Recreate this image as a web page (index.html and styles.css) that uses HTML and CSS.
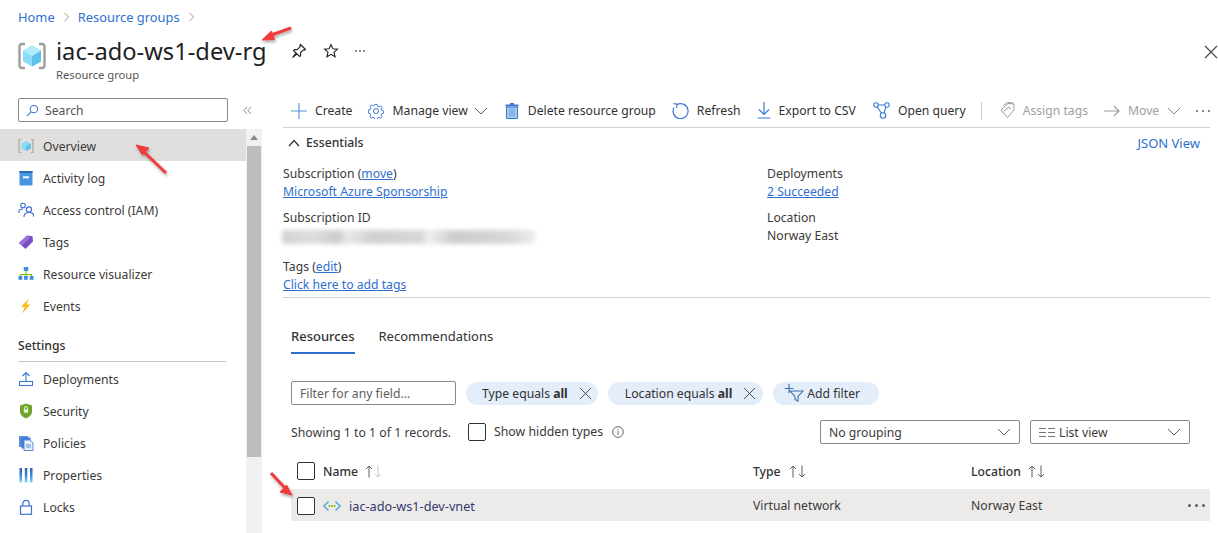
FILE: index.html
```html
<!DOCTYPE html>
<html lang="en">
<head>
<meta charset="utf-8">
<title>iac-ado-ws1-dev-rg</title>
<link rel="stylesheet" href="styles.css">
</head>
<body>
<div class="page">
  <header class="head">
    <nav class="crumbs"><a>Home</a><svg class="crumb-sep" viewBox="0 0 8 12"><path d="M1.500 1l5 5-5 5"/></svg><a>Resource groups</a><svg class="crumb-sep" viewBox="0 0 8 12"><path d="M1.500 1l5 5-5 5"/></svg></nav>
    <div class="titlebar">
      <svg class="rg-icon" viewBox="0 0 28 28">
        <path d="M7 2H3.200L1.500 3.500v21L3.200 26H7" fill="none" stroke="#9c9c9c" stroke-width="2.400"/>
        <path d="M21 2h3.800l1.700 1.500v21L24.800 26H21" fill="none" stroke="#9c9c9c" stroke-width="2.400"/>
        <path d="M14 3.500l9 5v11l-9 5-9-5v-11z" fill="#8adcf6"/>
        <path d="M14 14l9-5.500v11l-9 5z" fill="#5fc2e6"/>
        <path d="M14 3.500l9 5L14 14 5 8.500z" fill="#b3ebfb"/>
      </svg>
      <div class="title-text">
        <h1>iac-ado-ws1-dev-rg</h1>
        <p>Resource group</p>
      </div>
      <div class="title-actions">
        <svg viewBox="0 0 16 16" class="ic16"><path d="M9.500 1.500l5 5-1 .6-1-.3-3 3 .2 2.700-1 1L5 10 1.500 14.500 6 11 2.500 7.500l1-1 2.700.2 3-3-.3-1z" fill="none" stroke="#222" stroke-width="1.100"/></svg>
        <svg viewBox="0 0 16 16" class="ic16"><path d="M8 1.500l1.900 4.300 4.600.4-3.500 3 1.100 4.600L8 11.400l-4.100 2.400L5 9.200l-3.500-3 4.600-.4z" fill="none" stroke="#222" stroke-width="1.100"/></svg>
        <span class="dots-sm"><i></i><i></i><i></i></span>
      </div>
      <svg class="close-x" viewBox="0 0 14 14"><path d="M1 1l12 12M13 1L1 13"/></svg>
    </div>
  </header>

  <div class="main">
    <aside class="side">
      <div class="side-scroll">
        <div class="search-row">
          <div class="search">
            <svg viewBox="0 0 14 14" class="ic13"><circle cx="8.500" cy="5.500" r="4" fill="none" stroke="#3f74c9" stroke-width="1.100"/><path d="M5.500 8.500L1 13" stroke="#3f74c9" stroke-width="1.100"/></svg>
            <span>Search</span>
          </div>
          <svg class="collapse" viewBox="0 0 10 10"><path d="M4.500 1L1 5l3.500 4M9 1L5.500 5 9 9"/></svg>
        </div>
        <ul class="nav">
          <li class="active"><svg class="nav-ic" viewBox="0 0 16 16"><path d="M3 1.500H1v13h2M13 1.500h2v13h-2" fill="none" stroke="#aaa" stroke-width="1.200"/><path d="M8 3l4.700 2.500v5L8 13l-4.700-2.500v-5z" fill="#8adcf6"/><path d="M8 8l4.700-2.500v5L8 13z" fill="#5fc2e6"/></svg>Overview</li>
          <li><svg class="nav-ic" viewBox="0 0 16 16"><rect x="1.500" y="1" width="13" height="14.500" rx="1.200" fill="#4a95e0"/><rect x="1.500" y="1" width="13" height="2" fill="#2a6cb8"/><rect x="5" y="6.300" width="6" height="2" fill="#fff"/></svg>Activity log</li>
          <li><svg class="nav-ic" viewBox="0 0 16 16" fill="none" stroke="#3d6fd3" stroke-width="1.100"><circle cx="5" cy="3.500" r="2.300"/><circle cx="11" cy="7.500" r="2.600"/><path d="M1 11V9.500C1 7.500 2.500 7 5 7M6 15c0-3 2-4.500 5-4.500s5 1.500 5 4.500"/></svg>Access control (IAM)</li>
          <li><svg class="nav-ic" viewBox="0 0 16 16"><path d="M1 9l8-7.500 5.500.7.500 5.300L7.500 15z" fill="#7b4dc4"/><path d="M1 9l8-7.500 3 2-8 8z" fill="#9a71dc"/></svg>Tags</li>
          <li><svg class="nav-ic" viewBox="0 0 16 16"><path d="M8 4v6M2.500 11V8.500h11V11" fill="none" stroke="#7fba00" stroke-width="1.100"/><rect x="5.800" y="1" width="4.400" height="4" fill="#3f8ddb"/><rect x="0.500" y="10" width="3.800" height="3.800" fill="#3f8ddb"/><rect x="6" y="10" width="3.800" height="3.800" fill="#3f8ddb"/><rect x="11.700" y="10" width="3.800" height="3.800" fill="#3f8ddb"/></svg>Resource visualizer</li>
          <li><svg class="nav-ic" viewBox="0 0 16 16"><path d="M11 .5L3 9h4l-3 6.500L12.500 6.500h-4z" fill="#fbb91a"/></svg>Events</li>
        </ul>
        <div class="side-head">Settings</div>
        <ul class="nav">
          <li><svg class="nav-ic" viewBox="0 0 16 16" fill="none" stroke="#3d78d3" stroke-width="1.100"><path d="M8 10V1.500M4.500 5L8 1.500 11.500 5"/><rect x="1.500" y="10.500" width="13" height="4"/></svg>Deployments</li>
          <li><svg class="nav-ic" viewBox="0 0 16 16"><path d="M8 .5l6 2v6c0 3.500-3 5.700-6 7-3-1.300-6-3.500-6-7v-6z" fill="#6fa52a"/><rect x="5.800" y="6.200" width="4.400" height="3.500" fill="#e8f3d6"/><path d="M6.500 6.200V5a1.500 1.500 0 013 0v1.200" fill="none" stroke="#e8f3d6"/></svg>Security</li>
          <li><svg class="nav-ic" viewBox="0 0 16 16"><rect x="1" y="1" width="9" height="11" fill="#5a8fdd"/><rect x="3.500" y="2.500" width="9" height="11" fill="#3d78d3"/><path d="M6 5h6l3 3v7.500H6z" fill="#e8f0fb" stroke="#5a8fdd"/><path d="M8 10h5M8 12h5" stroke="#5a8fdd"/></svg>Policies</li>
          <li><svg class="nav-ic" viewBox="0 0 16 16"><defs><linearGradient id="pg" x1="0" y1="0" x2="0" y2="1"><stop offset="0" stop-color="#2c5fb8"/><stop offset=".55" stop-color="#3f8ddb"/><stop offset="1" stop-color="#7fd6f2"/></linearGradient></defs><rect x="1.500" y="1" width="2.500" height="14.500" fill="url(#pg)"/><rect x="6.800" y="1" width="2.500" height="14.500" fill="url(#pg)"/><rect x="12" y="1" width="2.500" height="14.500" fill="url(#pg)"/></svg>Properties</li>
          <li><svg class="nav-ic" viewBox="0 0 16 16" fill="none" stroke="#3d6fd3" stroke-width="1.200"><rect x="2.500" y="7" width="11" height="8.300"/><path d="M4.800 7V4.500a3.200 3.200 0 016.400 0V7"/></svg>Locks</li>
        </ul>
      </div>
      <div class="scrollbar">
        <svg class="scroll-up" viewBox="0 0 8 5"><path d="M4 0l4 5H0z"/></svg>
        <div class="thumb"></div>
      </div>
    </aside>

    <section class="content">
      <div class="toolbar">
        <span class="tool t-create"><svg viewBox="0 0 16 16" class="ic16"><path d="M8 0v16M0 8h16" stroke="#5b93e0" stroke-width="1.200"/></svg>Create</span>
        <span class="tool t-manage"><svg viewBox="0 0 16 16" class="ic16" fill="none" stroke="#3d78d3"><circle cx="8" cy="8" r="2.500"/><path d="M6.800 1h2.400l.4 2 1.500.7 1.800-1.100 1.600 1.700-1.100 1.700.7 1.500 1.900.5v2.400l-2 .4-.7 1.500 1.100 1.800-1.700 1.600-1.700-1.100-1.500.7-.5 1.900H6.800l-.4-2-1.500-.7-1.800 1.100-1.600-1.700 1.100-1.700-.7-1.500-1.900-.5V6.800l2-.4.700-1.500-1.100-1.800 1.700-1.600 1.700 1.100 1.500-.7z" transform="translate(.4 .4) scale(.95)"/></svg>Manage view<svg viewBox="0 0 14 8" class="chev chev-tight"><path d="M1 1l6 6 6-6"/></svg></span>
        <span class="tool t-delete"><svg viewBox="0 0 14 17" class="ic-trash"><path d="M5 1h4v1.500h4.500v2H.5v-2H5z" fill="#3d78d3"/><path d="M1.500 5h11v11.500h-11z" fill="#a8c8f0" stroke="#3d78d3"/><rect x="4" y="7" width="6" height="7.500" fill="#8ab4e8"/></svg>Delete resource group</span>
        <span class="tool t-refresh"><svg viewBox="0 0 17 17" class="ic17" fill="none" stroke="#3d78d3" stroke-width="1.200"><path d="M5 2.500a7.500 7.500 0 11-3 3"/><path d="M1.500 1.500L5.200 2.300 4.500 6"/></svg>Refresh</span>
        <span class="tool t-export"><svg viewBox="0 0 14 17" class="ic-trash" fill="none" stroke="#3d78d3" stroke-width="1.200"><path d="M7 0v12M2 7.500L7 12.500l5-5M.5 16h13"/></svg>Export to CSV</span>
        <span class="tool t-query"><svg viewBox="0 0 17 17" class="ic17" fill="none" stroke="#3d78d3" stroke-width="1.100"><circle cx="3" cy="3" r="2.200"/><circle cx="14" cy="3" r="2.200"/><circle cx="10" cy="13.500" r="2.700"/><path d="M5.200 3h6.600M4.200 5l4.300 6.300M13 5l-2 6"/></svg>Open query</span>
        <span class="tool-sep"></span>
        <span class="tool t-tags is-off"><svg viewBox="0 0 15 17" class="ic-tag" fill="none" stroke="#9a9a9a"><path d="M1 8l7-6.500 6 .5v6l-6.500 7.500z"/><path d="M3.500 3.500l4-3 6 .5"/><path d="M4 9l5-4 2 2.500"/></svg>Assign tags</span>
        <span class="tool t-move is-off"><svg viewBox="0 0 16 12" class="ic-move" fill="none" stroke="#9a9a9a" stroke-width="1.100"><path d="M0 6h15M10 1l5 5-5 5"/></svg>Move<svg viewBox="0 0 14 8" class="chev"><path d="M1 1l6 6 6-6"/></svg></span>
        <span class="dots"><i></i><i></i><i></i></span>
      </div>

      <div class="ess-head">
        <span class="ess-title"><svg viewBox="0 0 12 8" class="ess-chev"><path d="M1 7l5-5.500L11 7"/></svg>Essentials</span>
        <a class="json">JSON View</a>
      </div>
      <div class="ess-grid">
        <div class="ess-col">
          <div class="field"><div>Subscription (<a class="u">move</a>)</div><div><a class="u">Microsoft Azure Sponsorship</a></div></div>
          <div class="field"><div>Subscription ID</div><div class="blurred"></div></div>
          <div class="field field-tags"><div>Tags (<a class="u">edit</a>)</div><div><a class="u">Click here to add tags</a></div></div>
        </div>
        <div class="ess-col">
          <div class="field"><div>Deployments</div><div><a class="u">2 Succeeded</a></div></div>
          <div class="field"><div>Location</div><div>Norway East</div></div>
        </div>
      </div>

      <div class="res">
        <div class="tabs">
          <span class="tab on">Resources</span>
          <span class="tab">Recommendations</span>
        </div>
        <div class="filters">
          <div class="filter-input">Filter for any field...</div>
          <span class="pill">Type equals&nbsp;<b>all</b><svg viewBox="0 0 14 14" class="pill-x"><path d="M1 1l12 12M13 1L1 13"/></svg></span>
          <span class="pill pill-loc">Location equals&nbsp;<b>all</b><svg viewBox="0 0 14 14" class="pill-x"><path d="M1 1l12 12M13 1L1 13"/></svg></span>
          <span class="pill pill-add"><svg viewBox="0 0 20 18" class="add-ic" fill="none" stroke="#3d6fa8" stroke-width="1.100"><path d="M5 0v9M.5 4.500h9"/><path d="M6 7h13l-5 5.500v4.500l-3-1.500v-3z"/></svg>Add filter</span>
        </div>
        <div class="records">
          <span class="rec-count">Showing 1 to 1 of 1 records.</span>
          <span class="check"></span>
          <span class="rec-hidden">Show hidden types</span>
          <svg viewBox="0 0 12 12" class="info"><circle cx="6" cy="6" r="5.300" fill="none" stroke="#666"/><path d="M6 5v4M6 3v1.200" stroke="#666"/></svg>
          <div class="select sel-group"><span>No grouping</span><svg viewBox="0 0 14 8" class="chev"><path d="M1 1l6 6 6-6"/></svg></div>
          <div class="select sel-view"><span class="sel-label"><svg viewBox="0 0 16 9" class="list-ic"><path d="M0 .5h7M9 .5h7M0 4.500h7M9 4.500h7M0 8.500h7M9 8.500h7" stroke="#777"/></svg>List view</span><svg viewBox="0 0 14 8" class="chev"><path d="M1 1l6 6 6-6"/></svg></div>
        </div>
        <div class="thead grid-row">
          <span class="cell-name"><span class="check"></span><b>Name</b><svg class="sort" viewBox="0 0 18 13" fill="none"><path d="M4 12.500V1M1 4l3-3 3 3" stroke="#605e5c"/><path d="M13 .5V12M10 9l3 3 3-3" stroke="#c8c6c4"/></svg></span>
          <span class="cell-head"><b>Type</b><svg class="sort sort-type" viewBox="0 0 18 13" fill="none"><path d="M4 12.500V1M1 4l3-3 3 3" stroke="#605e5c"/><path d="M13 .5V12M10 9l3 3 3-3" stroke="#605e5c"/></svg></span>
          <span class="cell-head"><b>Location</b><svg class="sort" viewBox="0 0 18 13" fill="none"><path d="M4 12.500V1M1 4l3-3 3 3" stroke="#605e5c"/><path d="M13 .5V12M10 9l3 3 3-3" stroke="#605e5c"/></svg></span>
        </div>
        <div class="trow grid-row">
          <span class="cell-name"><span class="check"></span><svg viewBox="0 0 18 10" class="vnet"><path d="M5.500 .5L.8 5l4.700 4.500M12.500 .5L17.200 5l-4.700 4.500" fill="none" stroke="#3f9fd8" stroke-width="1.200"/><circle cx="6.500" cy="5" r="1" fill="#7fba00"/><circle cx="9" cy="5" r="1" fill="#7fba00"/><circle cx="11.500" cy="5" r="1" fill="#7fba00"/></svg><span class="res-name">iac-ado-ws1-dev-vnet</span></span>
          <span>Virtual network</span>
          <span class="cell-loc">Norway East<span class="dots dots-row"><i></i><i></i><i></i></span></span>
        </div>
      </div>
    </section>
  </div>

  <svg class="annot" viewBox="0 0 1218 533">
    <defs><filter id="sh" x="-30%" y="-30%" width="160%" height="160%"><feDropShadow dx="1" dy="2" stdDeviation="1.500" flood-color="#000" flood-opacity=".35"/></filter></defs>
    <g filter="url(#sh)" fill="#ef3b3b" stroke="#ef3b3b" stroke-linejoin="round">
      <path d="M291 28L270 35.500" stroke-width="3"/><path d="M262 40l9.500-9 3 8.500z"/>
      <path d="M166 173L144 152" stroke-width="3"/><path d="M136 145l13 3-6.500 7z"/>
      <path d="M271 473L285 488" stroke-width="3"/><path d="M292 495l-12-3 6.500-7z"/>
    </g>
  </svg>
</div>
</body>
</html>
```
FILE: styles.css
```css
* { box-sizing: border-box; }
html, body { margin: 0; padding: 0; background: #fff; }
body { font-family: "Noto Sans", "Open Sans", "Liberation Sans", sans-serif; font-size: 12.2px; color: #3b3a39; }
ul { list-style: none; margin: 0; padding: 0; }
a { color: #2f6fd0; }
a.u { text-decoration: underline; }
.page { position: relative; width: 1218px; height: 533px; overflow: hidden; }

.head { height: 98px; padding: 8px 0 0 18px; }
.crumbs { display: flex; align-items: center; height: 18px; font-size: 12.9px; }
.crumb-sep { width: 7px; height: 10px; margin: 0 8px; fill: none; stroke: #8a8886; stroke-width: 1; }
.titlebar { display: flex; align-items: flex-start; margin-top: 10px; }
.rg-icon { width: 28px; height: 28px; margin-top: 6px; flex: none; }
.title-text { margin-left: 10px; }
h1 { margin: 0; font-size: 23.7px; font-weight: 400; line-height: 31px; color: #1f1f1f; }
.title-text p { margin: 0; font-size: 11.2px; line-height: 15px; color: #555; }
.title-actions { display: flex; align-items: center; gap: 16px; height: 30px; margin-left: 24px; }
.ic16 { width: 16px; height: 16px; flex: none; }
.ic13 { width: 13px; height: 13px; flex: none; }
.dots-sm { display: flex; gap: 2px; width: 12px; }
.dots-sm i { width: 2px; height: 2px; background: #666; border-radius: 50%; }
.close-x { width: 14px; height: 14px; margin: 9px 0 0 auto; fill: none; stroke: #444; stroke-width: 1.100; flex: none; }

.main { display: flex; height: 435px; }
.side { display: flex; width: 262px; flex: none; }
.side-scroll { width: 246px; flex: none; }
.search-row { display: flex; align-items: flex-start; padding-left: 18px; height: 31px; }
.search { display: flex; align-items: center; gap: 6px; width: 210px; height: 24px; padding-left: 7px; border: 1px solid #8a8886; border-radius: 2px; color: #555; flex: none; }
.collapse { width: 9px; height: 9px; margin: 8px 0 0 15px; fill: none; stroke: #8a8886; stroke-width: 1; flex: none; }
.nav li { display: flex; align-items: center; height: 32px; padding-left: 18px; }
.nav li.active { background: #e1dfdd; padding-top: 2px; }
.nav li.active + li { margin-top: 1px; }
.nav-ic { width: 16px; height: 16px; margin-right: 9px; flex: none; }
.side-head { margin: 7px 0 0 18px; width: 208px; height: 33px; padding-top: 8px; font-weight: 500; color: #323130; border-bottom: 1px solid #c8c6c4; }
.side-head + .nav { padding-top: 1px; }
.scrollbar { width: 16px; height: 404px; margin-top: 31px; background: #f1f1f1; padding: 6px 1px 0; display: flex; flex-direction: column; align-items: center; }
.scroll-up { width: 8px; height: 5px; fill: #8a8a8a; flex: none; }
.thumb { width: 14px; height: 311px; margin-top: 6px; background: #bdbdbd; flex: none; }

.content { flex: 1; min-width: 0; padding: 0 8px 0 21px; }
.toolbar { display: flex; align-items: center; height: 30px; padding: 0 0 4px 8px; border-bottom: 1px solid #d2d0ce; }
.tool { display: flex; align-items: center; gap: 8px; color: #323130; white-space: nowrap; flex: none; }
.t-manage, .t-refresh, .t-export, .t-move { margin-left: 16px; }
.t-delete, .t-query { margin-left: 17px; }
.chev-tight { margin-left: -2px; }
.t-delete .ic-trash { margin-right: 1px; }
.ic-trash { width: 14px; height: 17px; flex: none; }
.ic17 { width: 17px; height: 17px; flex: none; }
.chev { width: 14px; height: 8px; fill: none; stroke: #605e5c; stroke-width: 1; flex: none; }
.tool-sep { width: 1px; height: 18px; background: #d2d0ce; margin: 0 18px 0 15px; flex: none; }
.is-off { color: #a19f9d; }
.ic-tag { width: 15px; height: 17px; flex: none; }
.ic-move { width: 16px; height: 12px; flex: none; }
.is-off .chev { stroke: #8a8886; }
.dots { display: inline-flex; gap: 4px; margin-left: 15px; flex: none; }
.dots i { width: 2px; height: 2px; border-radius: 50%; background: #605e5c; }
.ess-head { display: flex; justify-content: space-between; align-items: center; height: 29px; padding-right: 10px; }
.ess-title { display: flex; align-items: center; gap: 6px; font-weight: 500; color: #323130; }
.ess-chev { width: 12px; height: 8px; margin-left: 5px; fill: none; stroke: #323130; stroke-width: 1.200; }
.json { font-size: 13px; }
.ess-grid { display: grid; grid-template-columns: 484px 1fr; height: 141px; border-bottom: 1px solid #d2d0ce; padding-top: 7px; }
.field { height: 44px; line-height: 18px; padding-top: 1px; }
.field-tags { margin-top: 5px; }
.blurred { width: 253px; height: 14px; margin: 3px 0 0 -1px; background: linear-gradient(90deg, #d2d2d2, #dedede 12%, #cccccc 22%, #e8e8e8 26%, #d0d0d0 36%, #d8d8d8 55%, #eee 58%, #cdcdcd 68%, #d8d8d8 90%, #eee); filter: blur(2px); }
.res { padding-left: 8px; }
.tabs { display: flex; gap: 24px; margin-top: 28px; height: 28px; }
.tab { color: #323130; font-size: 13px; line-height: 20px; }
.tab.on { font-weight: 500; border-bottom: 2px solid #2f6fd0; height: 28px; }
.filters { display: flex; align-items: center; gap: 10px; margin-top: 27px; height: 24px; }
.filter-input { width: 165px; height: 24px; padding-left: 8px; line-height: 23px; border: 1px solid #8a8886; border-radius: 2px; color: #605e5c; }
.pill { display: flex; align-items: center; height: 23px; padding: 0 6px 0 16px; background: #e3eefa; border-radius: 12px; color: #323130; white-space: nowrap; flex: none; }
.pill b { font-weight: 700; }
.pill-x { width: 13px; height: 13px; margin-left: 11px; fill: none; stroke: #444; stroke-width: 1; }
.pill-loc { padding: 0 7px 0 17px; }
.pill-add { padding: 0 19px 0 11px; gap: 3px; }
.add-ic { width: 20px; height: 18px; flex: none; }
.records { display: flex; align-items: center; height: 24px; margin-top: 15px; padding-right: 20px; }
.rec-count { width: 177px; font-size: 12.3px; }
.check { display: block; width: 18px; height: 18px; border: 1px solid #323130; border-radius: 2px; background: #fff; flex: none; }
.rec-hidden { margin-left: 8px; position: relative; top: -1px; font-size: 12.3px; }
.info { width: 12px; height: 12px; margin-left: 9px; flex: none; }
.select { display: flex; justify-content: space-between; align-items: center; height: 24px; padding: 0 8px; border: 1px solid #8a8886; border-radius: 2px; flex: none; }
.sel-group { width: 200px; margin-left: auto; }
.sel-view { width: 160px; margin-left: 10px; }
.sel-label { display: flex; align-items: center; gap: 4px; }
.list-ic { width: 16px; height: 9px; }
.grid-row { display: grid; grid-template-columns: 462px 218px 1fr; align-items: center; }
.thead { height: 32px; margin-top: 11px; }
.thead b { font-weight: 500; color: #323130; }
.cell-name { display: flex; align-items: center; padding-left: 6px; }
.cell-name .check { margin-right: 8px; }
.cell-head { display: flex; align-items: center; }
.sort { width: 18px; height: 13px; margin-left: 7px; flex: none; }
.sort-type { margin-left: 8px; }
.trow { height: 32px; margin-top: 2px; padding-top: 1px; background: #edebe9; }
.vnet { width: 18px; height: 10px; flex: none; }
.res-name { margin-left: 8px; color: #323a6e; font-size: 12.7px; }
.cell-loc { display: flex; justify-content: space-between; align-items: center; padding-right: 5px; }
.dots-row { margin-left: 0; }
.dots-row i { width: 3px; height: 3px; }
.annot { position: absolute; left: 0; top: 0; width: 1218px; height: 533px; pointer-events: none; }
```
